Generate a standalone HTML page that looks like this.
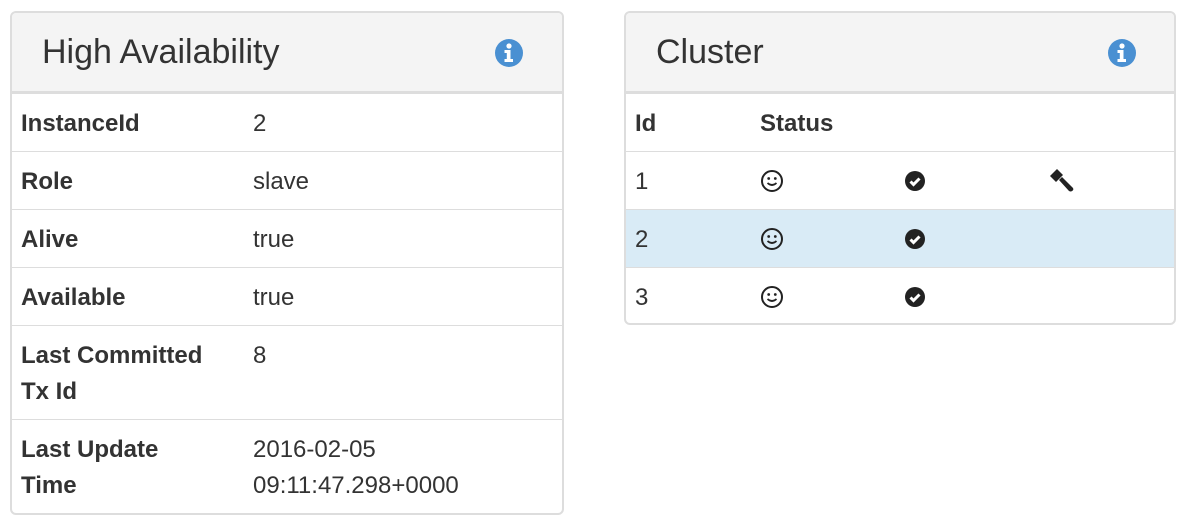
<!DOCTYPE html>
<html><head><style>
body{margin:0;background:#fff;font-family:"Liberation Sans",Arial,sans-serif;color:#333;width:1192px;height:524px;overflow:hidden;position:relative}
.p{position:absolute;top:11px;border:2px solid #ddd;border-radius:6px;background:#fff;box-sizing:border-box;overflow:hidden}
.h{height:81px;background:#f4f4f4;border-bottom:3px solid #ddd;position:relative;box-sizing:border-box}
.h span{position:absolute;left:30px;top:20px;font-size:34px;color:#333}
.h svg{position:absolute;top:25px}
table{border-collapse:collapse;width:100%;font-size:24px}
td{padding:12px 9px 9px;line-height:36px;vertical-align:top;border-top:1px solid #ddd}
tr:first-child td{border-top:none}
b{font-weight:bold}
.s{vertical-align:-4px}
</style></head><body>
<div class="p" style="left:10px;width:554px;height:504px">
<div class="h"><span>High Availability</span>
<svg style="left:482px" width="30" height="30" viewBox="0 0 30 30"><circle cx="15" cy="15" r="14" fill="#4a90d2"/><circle cx="15" cy="8" r="2.6" fill="#fff"/><path d="M10.5 12h6v9h2.5v3h-8.5v-3h2.3v-6h-2.3z" fill="#fff"/></svg></div>
<table>
<tr><td style="width:214px"><b>InstanceId</b></td><td>2</td></tr>
<tr><td><b>Role</b></td><td>slave</td></tr>
<tr><td><b>Alive</b></td><td>true</td></tr>
<tr><td><b>Available</b></td><td>true</td></tr>
<tr><td><b>Last Committed<br>Tx Id</b></td><td>8</td></tr>
<tr><td><b>Last Update<br>Time</b></td><td>2016-02-05<br>09:11:47.298+0000</td></tr>
</table></div>
<div class="p" style="left:624px;width:552px;height:314px">
<div class="h"><span>Cluster</span>
<svg style="left:481px" width="30" height="30" viewBox="0 0 30 30"><circle cx="15" cy="15" r="14" fill="#4a90d2"/><circle cx="15" cy="8" r="2.6" fill="#fff"/><path d="M10.5 12h6v9h2.5v3h-8.5v-3h2.3v-6h-2.3z" fill="#fff"/></svg></div>
<table>
<tr><td style="width:107px"><b>Id</b></td><td style="width:126px"><b>Status</b></td><td style="width:126px"></td><td></td></tr>
<tr><td>1</td><td><svg class="s" width="24" height="24" viewBox="0 0 24 24"><circle cx="12" cy="12" r="10" stroke="#222" stroke-width="2" fill="none"/><circle cx="8.7" cy="9.5" r="1.4" fill="#222"/><circle cx="15.3" cy="9.5" r="1.4" fill="#222"/><path d="M7.5 14q4.5 4 9 0" stroke="#222" stroke-width="1.8" fill="none"/></svg></td><td><svg width="22" height="22" viewBox="0 0 22 22" style="vertical-align:-3px"><circle cx="11" cy="11" r="10" fill="#222"/><path d="M6.5 11.5l3 3 6-6" stroke="#fff" stroke-width="3" fill="none"/></svg></td><td><svg width="28" height="28" viewBox="0 0 28 28" style="vertical-align:-6px"><path d="M2 9l7-7 6 6-7 7z" fill="#222"/><path d="M11 13l3-3 11 11q1 2-1 3-1 1-3 0z" fill="#222"/></svg></td></tr>
<tr style="background:#d9ebf6"><td>2</td><td><svg class="s" width="24" height="24" viewBox="0 0 24 24"><circle cx="12" cy="12" r="10" stroke="#222" stroke-width="2" fill="none"/><circle cx="8.7" cy="9.5" r="1.4" fill="#222"/><circle cx="15.3" cy="9.5" r="1.4" fill="#222"/><path d="M7.5 14q4.5 4 9 0" stroke="#222" stroke-width="1.8" fill="none"/></svg></td><td><svg width="22" height="22" viewBox="0 0 22 22" style="vertical-align:-3px"><circle cx="11" cy="11" r="10" fill="#222"/><path d="M6.5 11.5l3 3 6-6" stroke="#fff" stroke-width="3" fill="none"/></svg></td><td></td></tr>
<tr><td>3</td><td><svg class="s" width="24" height="24" viewBox="0 0 24 24"><circle cx="12" cy="12" r="10" stroke="#222" stroke-width="2" fill="none"/><circle cx="8.7" cy="9.5" r="1.4" fill="#222"/><circle cx="15.3" cy="9.5" r="1.4" fill="#222"/><path d="M7.5 14q4.5 4 9 0" stroke="#222" stroke-width="1.8" fill="none"/></svg></td><td><svg width="22" height="22" viewBox="0 0 22 22" style="vertical-align:-3px"><circle cx="11" cy="11" r="10" fill="#222"/><path d="M6.5 11.5l3 3 6-6" stroke="#fff" stroke-width="3" fill="none"/></svg></td><td></td></tr>
</table></div>
</body></html>
